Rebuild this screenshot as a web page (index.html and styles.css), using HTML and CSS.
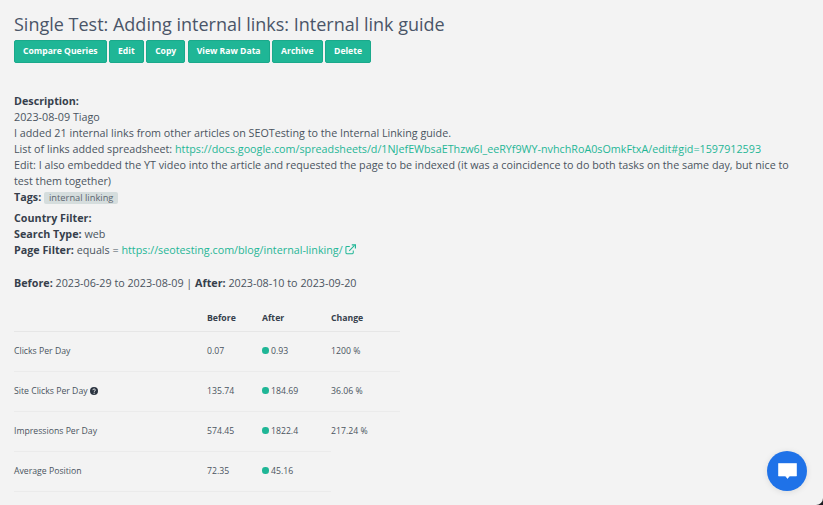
FILE: index.html
```html
<!DOCTYPE html>
<html lang="en">
<head>
    <meta charset="UTF-8">
    <title>Single Test: Adding internal links: Internal link guide</title>
    <link rel="stylesheet" href="styles.css">
</head>
<body>
    <h1>Single Test: Adding internal links: Internal link guide</h1>
    <div class="actions">
        <a class="btn">Compare Queries</a>
        <a class="btn">Edit</a>
        <a class="btn">Copy</a>
        <a class="btn">View Raw Data</a>
        <a class="btn">Archive</a>
        <a class="btn">Delete</a>
    </div>

    <div class="description">
        <b>Description:</b><br>
        2023-08-09 Tiago<br>
        I added 21 internal links from other articles on SEOTesting to the Internal Linking guide.<br>
        List of links added spreadsheet: <a class="link">https://docs.google.com/spreadsheets/d/1NJefEWbsaEThzw6l_eeRYf9WY-nvhchRoA0sOmkFtxA/edit#gid=1597912593</a><br>
        Edit: I also embedded the YT video into the article and requested the page to be indexed (it was a coincidence to do both tasks on the same day, but nice to test them together)<br>
        <b>Tags:</b> <span class="tag">internal linking</span>
    </div>

    <div class="filters">
        <b>Country Filter:</b><br>
        <b>Search Type:</b> web<br>
        <b>Page Filter:</b> equals = <a class="link">https://seotesting.com/blog/internal-linking/</a>
        <svg class="ext" viewBox="0 0 12 12" width="11" height="11" fill="none" stroke="#1fb696" stroke-width="1.1">
            <path d="M9 7v2.600a1 1 0 0 1-1 1H2a1 1 0 0 1-1-1V3.600a1 1 0 0 1 1-1h3.200"/>
            <path d="M4.600 7.400 10.400 1.600"/>
            <path d="M7.400 1h4v4" stroke-width="1.3"/>
        </svg>
    </div>

    <div class="dates">
        <b>Before:</b> 2023-06-29 to 2023-08-09 | <b>After:</b> 2023-08-10 to 2023-09-20
    </div>

    <table class="stats">
        <thead>
            <tr><th class="name"></th><th class="before">Before</th><th class="after">After</th><th class="change">Change</th></tr>
        </thead>
        <tbody>
            <tr><td>Clicks Per Day</td><td>0.07</td><td><span class="dot"></span>0.93</td><td>1200 %</td></tr>
            <tr>
                <td>Site Clicks Per Day
                    <svg class="help" viewBox="0 0 12 12" width="8" height="8"><circle cx="6" cy="6" r="6" fill="#2b3440"/><path d="M4.200 4.700c0-2.300 3.800-2.300 3.800-.1 0 1.400-1.700 1.300-1.700 2.600" fill="none" stroke="#f3f3f3" stroke-width="1.400"/><circle cx="6.200" cy="9.200" r=".9" fill="#f3f3f3"/></svg>
                </td>
                <td>135.74</td><td><span class="dot"></span>184.69</td><td>36.06 %</td>
            </tr>
            <tr><td>Impressions Per Day</td><td>574.45</td><td><span class="dot"></span>1822.4</td><td>217.24 %</td></tr>
            <tr class="last"><td>Average Position</td><td>72.35</td><td><span class="dot"></span>45.16</td></tr>
        </tbody>
    </table>

    <div class="chat">
        <svg viewBox="0 0 19 16" width="19" height="16"><path d="M.5.500h18v12.500h-7l-2 2.500-2-2.500h-7z" fill="#fff" stroke="#fff" stroke-width=".6" stroke-linejoin="round"/></svg>
    </div>
</body>
</html>
```

FILE: styles.css
```css
html, body {
    height: 100%;
}
html {
    background: #1d1d22;
}
body {
    font-family: "Open Sans", sans-serif;
    font-size: 10.75px;
    line-height: 16px;
    color: #4a5360;
    background: #f3f3f3;
    margin: 0;
    padding: 12px 14px 0;
    box-sizing: border-box;
    overflow: hidden;
    border-bottom-right-radius: 7px;
}
b {
    color: #363f4c;
    font-weight: 700;
}
h1 {
    font-size: 18px;
    line-height: 24px;
    font-weight: 400;
    color: #4a5568;
    margin: 0 0 4px 0;
}
.actions {
    display: flex;
    gap: 2.5px;
    margin-bottom: 30px;
}
.btn {
    background: #1fb696;
    color: #fff;
    font-size: 8.6px;
    font-weight: 700;
    line-height: 12.5px;
    padding: 4px 8px;
    border: 1px solid #1aa98b;
    border-radius: 2px;
}
.link {
    color: #1fb696;
}
.description {
    margin-bottom: 5px;
}
.tag {
    display: inline-block;
    background: #d5dddd;
    color: #5c6670;
    font-size: 9.3px;
    line-height: 12px;
    padding: 0 5px;
    border-radius: 2px;
}
.filters {
    margin-bottom: 17px;
}
.ext {
    vertical-align: -1px;
}
.dates {
    margin-bottom: 15px;
}
.stats {
    border-collapse: collapse;
    table-layout: fixed;
    width: 386px;
    font-size: 8.7px;
    line-height: 13px;
}
.stats th {
    text-align: left;
    font-weight: 700;
    color: #363f4c;
    padding: 6px 0 6px;
    border-bottom: 1px solid #e6e6e6;
}
.stats td {
    padding: 13px 0 13px;
    border-top: 1px solid #ebebeb;
}
.stats .last td {
    border-bottom: 1px solid #ebebeb;
}
.name {
    width: 193px;
}
.before {
    width: 55px;
}
.after {
    width: 69px;
}
.dot {
    display: inline-block;
    width: 6.5px;
    height: 6.5px;
    border-radius: 50%;
    background: #1fb696;
    margin-right: 2.5px;
}
.help {
    vertical-align: -1px;
}
.chat {
    position: fixed;
    right: 16px;
    bottom: 14px;
    width: 40px;
    height: 40px;
    border-radius: 50%;
    background: #1f72e8;
    display: flex;
    align-items: center;
    justify-content: center;
    box-shadow: 0 1px 6px rgba(0,0,0,0.1);
}
```
